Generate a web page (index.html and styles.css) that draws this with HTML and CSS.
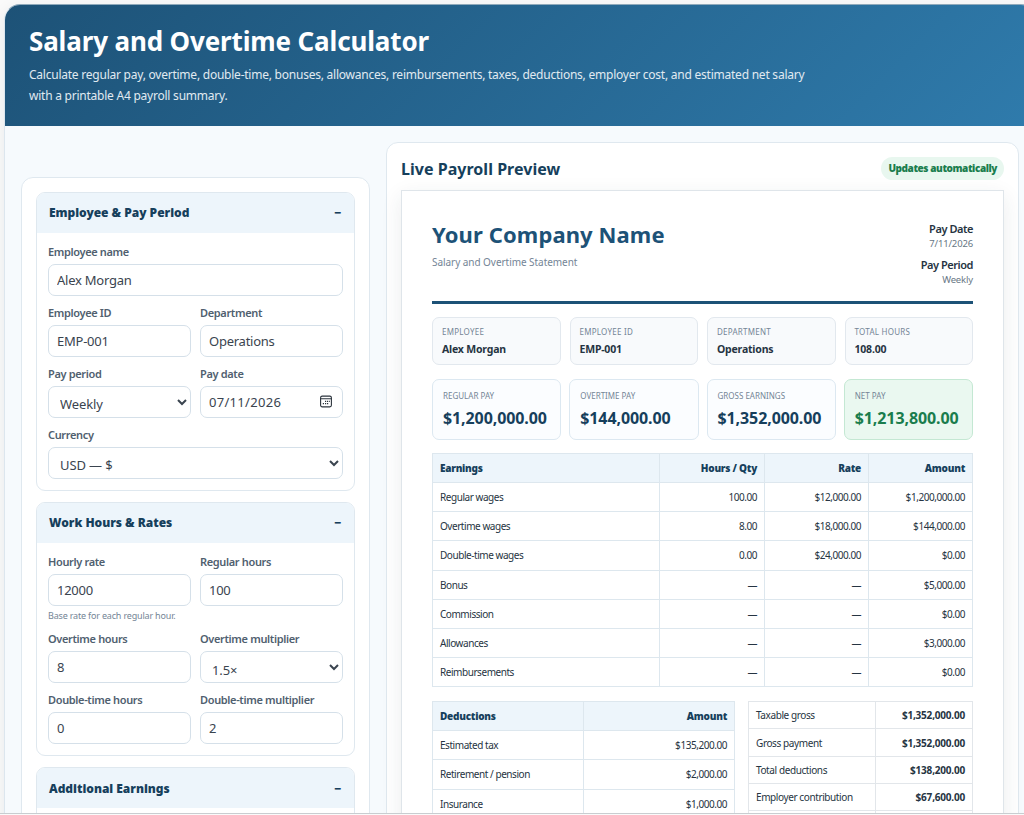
FILE: index.html
```html
<!DOCTYPE html>
<html lang="en">
<head>
    <meta charset="UTF-8">
    <meta name="viewport" content="width=device-width, initial-scale=1.0">
    <title>Salary and Overtime Calculator</title>
    <link rel="stylesheet" href="styles.css">
</head>
<body>

<div class="viewport">
<div class="calculator">

    <header class="hero">
        <h1>Salary and Overtime Calculator</h1>
        <p>Calculate regular pay, overtime, double-time, bonuses, allowances, reimbursements, taxes, deductions, employer cost, and estimated net salary<br>with a printable A4 payroll summary.</p>
    </header>

    <main class="layout">

        <form class="form-card">
            <section class="group">
                <h2><span>Employee &amp; Pay Period</span><span class="toggle">−</span></h2>
                <div class="fields">
                    <div class="field wide">
                        <label for="name">Employee name</label>
                        <input type="text" id="name" value="Alex Morgan">
                    </div>
                    <div class="field">
                        <label for="empId">Employee ID</label>
                        <input type="text" id="empId" value="EMP-001">
                    </div>
                    <div class="field">
                        <label for="dept">Department</label>
                        <input type="text" id="dept" value="Operations">
                    </div>
                    <div class="field">
                        <label for="period">Pay period</label>
                        <select id="period"><option>Weekly</option><option>Monthly</option></select>
                    </div>
                    <div class="field">
                        <label for="date">Pay date</label>
                        <div class="date-input" id="date">
                            <span>07/11/2026</span>
                            <svg width="12" height="13" viewBox="0 0 12 13" fill="none" stroke="#2b333c">
                                <rect x="0.6" y="1.1" width="10.8" height="10.8" rx="1.6" stroke-width="1.1"/>
                                <path d="M0.5 3.7h11" stroke-width="1.1"/>
                                <path d="M5 6.4h1.2M7 6.4h1.2M9 6.4h.8M2.8 8.6h1.2M5 8.6h1.2M7 8.6h1.2" stroke-width="1.2"/>
                            </svg>
                        </div>
                    </div>
                    <div class="field wide">
                        <label for="currency">Currency</label>
                        <select id="currency"><option>USD — $</option><option>EUR — €</option></select>
                    </div>
                </div>
            </section>

            <section class="group">
                <h2><span>Work Hours &amp; Rates</span><span class="toggle">−</span></h2>
                <div class="fields">
                    <div class="field">
                        <label for="rate">Hourly rate</label>
                        <input type="text" id="rate" value="12000">
                        <small>Base rate for each regular hour.</small>
                    </div>
                    <div class="field">
                        <label for="regHours">Regular hours</label>
                        <input type="text" id="regHours" value="100">
                    </div>
                    <div class="field">
                        <label for="otHours">Overtime hours</label>
                        <input type="text" id="otHours" value="8">
                    </div>
                    <div class="field">
                        <label for="otMult">Overtime multiplier</label>
                        <select id="otMult"><option>1.5×</option><option>2×</option></select>
                    </div>
                    <div class="field">
                        <label for="dtHours">Double-time hours</label>
                        <input type="text" id="dtHours" value="0">
                    </div>
                    <div class="field">
                        <label for="dtMult">Double-time multiplier</label>
                        <input type="text" id="dtMult" value="2">
                    </div>
                </div>
            </section>

            <section class="group">
                <h2><span>Additional Earnings</span><span class="toggle">−</span></h2>
                <div class="fields"></div>
            </section>
        </form>

        <section class="preview-card">
            <div class="preview-head">
                <h2>Live Payroll Preview</h2>
                <span class="badge">Updates automatically</span>
            </div>

            <article class="sheet">
                <div class="sheet-head">
                    <div>
                        <h3>Your Company Name</h3>
                        <p>Salary and Overtime Statement</p>
                    </div>
                    <div class="sheet-meta">
                        <strong>Pay Date</strong>
                        <span>7/11/2026</span>
                        <strong>Pay Period</strong>
                        <span>Weekly</span>
                    </div>
                </div>

                <div class="info-grid">
                    <div class="info"><span>EMPLOYEE</span><strong>Alex Morgan</strong></div>
                    <div class="info"><span>EMPLOYEE ID</span><strong>EMP-001</strong></div>
                    <div class="info"><span>DEPARTMENT</span><strong>Operations</strong></div>
                    <div class="info"><span>TOTAL HOURS</span><strong>108.00</strong></div>
                </div>

                <div class="total-grid">
                    <div class="total"><span>REGULAR PAY</span><strong>$1,200,000.00</strong></div>
                    <div class="total"><span>OVERTIME PAY</span><strong>$144,000.00</strong></div>
                    <div class="total"><span>GROSS EARNINGS</span><strong>$1,352,000.00</strong></div>
                    <div class="total net"><span>NET PAY</span><strong>$1,213,800.00</strong></div>
                </div>

                <table class="earnings">
                    <colgroup><col class="c-name"><col class="c-qty"><col class="c-rate"><col></colgroup>
                    <tr><th>Earnings</th><th>Hours / Qty</th><th>Rate</th><th>Amount</th></tr>
                    <tr><td>Regular wages</td><td>100.00</td><td>$12,000.00</td><td>$1,200,000.00</td></tr>
                    <tr><td>Overtime wages</td><td>8.00</td><td>$18,000.00</td><td>$144,000.00</td></tr>
                    <tr><td>Double-time wages</td><td>0.00</td><td>$24,000.00</td><td>$0.00</td></tr>
                    <tr><td>Bonus</td><td>—</td><td>—</td><td>$5,000.00</td></tr>
                    <tr><td>Commission</td><td>—</td><td>—</td><td>$0.00</td></tr>
                    <tr><td>Allowances</td><td>—</td><td>—</td><td>$3,000.00</td></tr>
                    <tr><td>Reimbursements</td><td>—</td><td>—</td><td>$0.00</td></tr>
                </table>

                <div class="bottom-grid">
                    <table class="deductions">
                        <colgroup><col class="c-half"><col></colgroup>
                        <tr><th>Deductions</th><th>Amount</th></tr>
                        <tr><td>Estimated tax</td><td>$135,200.00</td></tr>
                        <tr><td>Retirement / pension</td><td>$2,000.00</td></tr>
                        <tr><td>Insurance</td><td>$1,000.00</td></tr>
                    </table>
                    <table class="summary">
                        <colgroup><col class="c-label"><col></colgroup>
                        <tr><td>Taxable gross</td><td>$1,352,000.00</td></tr>
                        <tr><td>Gross payment</td><td>$1,352,000.00</td></tr>
                        <tr><td>Total deductions</td><td>$138,200.00</td></tr>
                        <tr><td>Employer contribution</td><td>$67,600.00</td></tr>
                        <tr><td></td><td></td></tr>
                    </table>
                </div>
            </article>
        </section>

    </main>
</div>
</div>

</body>
</html>
```
FILE: styles.css
```css
* {
    box-sizing: border-box;
}

body {
    margin: 0;
    background: #fafafa;
    color: #263442;
    font-family: 'Noto Sans', sans-serif;
    overflow: hidden;
}

h1, h2, h3, p {
    margin: 0;
}

.viewport {
    height: 814px;
    padding: 4px 0 0 4px;
    border-bottom: 1px solid #c9cdd0;
    overflow: hidden;
}

.calculator {
    width: 1033px;
    height: 1000px;
    border: 1px solid #dce6ee;
    border-top-color: #8fa9bb;
    border-radius: 16px;
    background: #f6fafd;
    overflow: hidden;
    box-shadow: 0 4px 16px rgba(30, 50, 70, 0.08);
}

.hero {
    height: 121px;
    padding: 18px 24px 0;
    background: linear-gradient(135deg, #1d5277, #2f7bac);
    color: #fff;
}

.hero h1 {
    font-size: 26px;
    line-height: 36px;
    font-weight: 700;
    letter-spacing: -0.14px;
}

.hero p {
    margin-top: 5px;
    font-size: 12px;
    line-height: 21px;
    letter-spacing: -0.235px;
    color: #e0eaf1;
    white-space: nowrap;
}

.layout {
    display: grid;
    grid-template-columns: 349px 633px;
    gap: 16px;
    align-items: start;
    padding: 16px;
}

.form-card {
    margin-top: 35px;
    padding: 14px;
    border: 1px solid #dfe8ef;
    border-radius: 12px;
    background: #fff;
    height: 900px;
}

.group {
    margin-bottom: 11.4px;
    border: 1px solid #dfe8ef;
    border-radius: 9px;
    overflow: hidden;
}

.group h2 {
    display: flex;
    justify-content: space-between;
    align-items: center;
    height: 39.6px;
    padding: 0 13px 0 12px;
    background: #edf5fb;
    color: #163f5c;
    font-size: 12px;
    font-weight: 900;
    letter-spacing: -0.03px;
}

.fields {
    display: grid;
    grid-template-columns: 1fr 1fr;
    gap: 9px;
    padding: 11px;
}

.wide {
    grid-column: 1 / -1;
}

.field label {
    display: block;
    margin-bottom: 5px;
    font-size: 11px;
    line-height: 15px;
    font-weight: 600;
    letter-spacing: -0.35px;
    color: #50606f;
}

.field input,
.field select,
.date-input {
    display: block;
    width: 100%;
    height: 32px;
    padding: 0 8px;
    border: 1px solid #d5e0e9;
    border-radius: 7px;
    background: #fff;
    color: #3a444f;
    font-family: inherit;
    font-size: 13px;
    letter-spacing: -0.25px;
}

.field select {
    padding: 5px 0 0 7px;
    letter-spacing: -0.1px;
}

.date-input {
    display: flex;
    align-items: center;
    justify-content: space-between;
    padding-right: 10px;
    letter-spacing: 0.3px;
}

.field small {
    display: block;
    margin-top: 3.5px;
    font-size: 9px;
    line-height: 13px;
    letter-spacing: -0.18px;
    color: #748596;
    white-space: nowrap;
}

.preview-card {
    height: 900px;
    padding: 14px;
    border: 1px solid #dfe8ef;
    border-radius: 12px;
    background: #fff;
}

.preview-head {
    display: flex;
    justify-content: space-between;
    align-items: center;
    height: 23px;
    margin-bottom: 10px;
}

.preview-head h2 {
    font-size: 16px;
    font-weight: 700;
    letter-spacing: 0.03px;
    color: #163f5c;
}

.badge {
    padding: 0 7px;
    border-radius: 12px;
    background: #e8f7ef;
    color: #1a7d4d;
    font-size: 10px;
    line-height: 23px;
    font-weight: 900;
    letter-spacing: -0.42px;
}

.sheet {
    height: 840px;
    padding: 30px;
    border: 1px solid #dfe5ea;
    background: #fff;
    box-shadow: 0 6px 20px rgba(30, 50, 70, 0.09);
}

.sheet-head {
    display: flex;
    justify-content: space-between;
    height: 83px;
    border-bottom: 3px solid #1d5277;
}

.sheet-head h3 {
    margin-top: -2px;
    font-size: 22px;
    line-height: 30px;
    font-weight: 700;
    letter-spacing: 0.1px;
    color: #1d5277;
}

.sheet-head p {
    margin-top: 6px;
    font-size: 10px;
    line-height: 14px;
    letter-spacing: -0.05px;
    color: #748596;
}

.sheet-meta {
    text-align: right;
}

.sheet-meta strong,
.sheet-meta span {
    display: block;
}

.sheet-meta strong {
    font-size: 11px;
    line-height: 16px;
    font-weight: 600;
    letter-spacing: -0.45px;
}

.sheet-meta span {
    margin-bottom: 6px;
    font-size: 9.5px;
    line-height: 14px;
    letter-spacing: -0.15px;
    color: #687785;
}

.info-grid,
.total-grid {
    display: grid;
    grid-template-columns: repeat(4, 1fr);
    gap: 9px;
    margin-top: 13px;
}

.total-grid {
    gap: 8px;
    margin-top: 14px;
}

.info,
.total {
    border: 1px solid #e2e8ee;
    border-radius: 7px;
    background: #f8fafc;
}

.info {
    height: 48px;
    padding: 8px 9px;
}

.info span,
.total span {
    display: block;
    font-size: 8px;
    line-height: 12px;
    color: #748596;
}

.info span {
    letter-spacing: 0.25px;
}

.info strong {
    display: block;
    margin-top: 3px;
    font-size: 10.5px;
    line-height: 16px;
    font-weight: 700;
    letter-spacing: -0.2px;
}

.total {
    height: 61px;
    padding: 10px;
    border-color: #dce8f1;
    background: #fbfdff;
}

.total strong {
    display: block;
    margin-top: 5px;
    font-size: 16px;
    line-height: 22px;
    font-weight: 700;
    letter-spacing: -0.1px;
    color: #163f5c;
}

.net {
    border-color: #c4e8d3;
    background: #eaf8f0;
}

.net strong {
    color: #1a7d4d;
}

table {
    width: 100%;
    border-collapse: collapse;
    table-layout: fixed;
}

th, td {
    height: 29.15px;
    padding: 0 7px;
    border: 1px solid #dde7ee;
    font-size: 10px;
    line-height: 14px;
    letter-spacing: -0.45px;
    text-align: right;
    white-space: nowrap;
}

th {
    background: #edf5fb;
    color: #163f5c;
    font-weight: 900;
    letter-spacing: -0.25px;
}

th:first-child,
td:first-child {
    text-align: left;
}

.earnings {
    margin-top: 13px;
}

.c-name {
    width: 227px;
}

.c-qty {
    width: 105px;
}

.c-rate {
    width: 104px;
}

.bottom-grid {
    display: grid;
    grid-template-columns: 303px 225px;
    justify-content: space-between;
    align-items: start;
    margin-top: 14px;
}

.c-half {
    width: 151px;
}

.c-label {
    width: 127px;
}

.summary td {
    height: 27.3px;
    border-color: #e2e6ea;
    letter-spacing: -0.4px;
}

.summary td:last-child {
    font-weight: 700;
    letter-spacing: -0.2px;
}
```
